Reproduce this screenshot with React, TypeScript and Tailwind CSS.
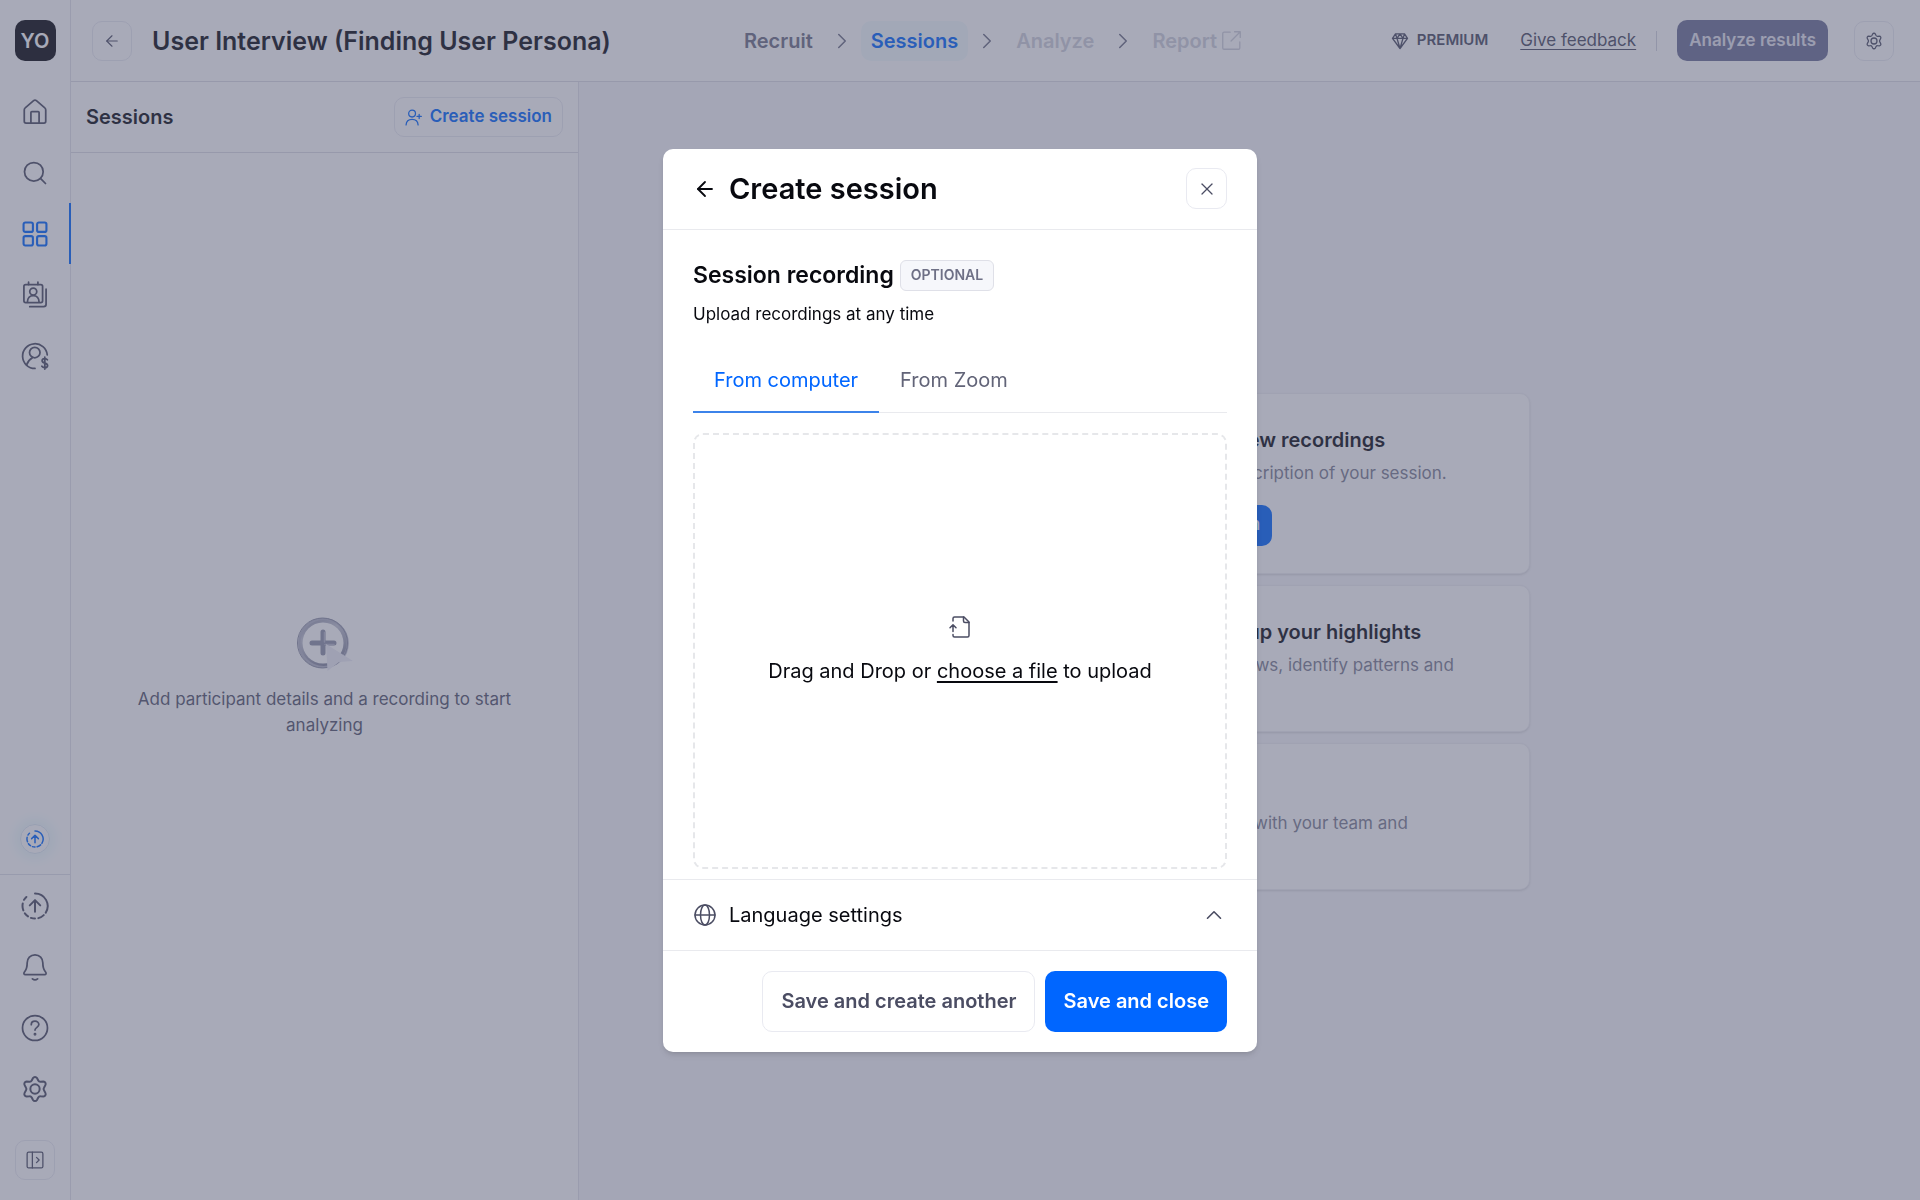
import type { ReactNode } from "react";
import { ArrowLeft, ChevronRight, ChevronUp, Search, X } from "lucide-react";

type IconProps = { className?: string; strokeWidth?: number; children?: ReactNode };

function Icon({ className = "size-6", strokeWidth = 1.5, children }: IconProps) {
  return (
    <svg
      viewBox="0 0 24 24"
      fill="none"
      stroke="currentColor"
      strokeWidth={strokeWidth}
      strokeLinecap="round"
      strokeLinejoin="round"
      className={className}
      aria-hidden="true"
    >
      {children}
    </svg>
  );
}

const HomeIcon = () => (
  <Icon className="size-7">
    <path d="M2.800 10.200c0-.7.300-1.300.8-1.700l7.200-6.200a1.800 1.800 0 0 1 2.400 0l7.200 6.200c.5.400.8 1 .8 1.700v9.800a1.500 1.500 0 0 1-1.500 1.500H4.300A1.500 1.500 0 0 1 2.800 20z" />
    <path d="M8.500 21.500v-9a.8.8 0 0 1 .8-.8h5.400a.8.8 0 0 1 .8.8v9" />
  </Icon>
);

const GridIcon = () => (
  <Icon className="size-7" strokeWidth={1.8}>
    <rect x="2.200" y="2.200" width="8" height="8" rx="1.500" />
    <rect x="13.800" y="2.200" width="8" height="8" rx="1.500" />
    <rect x="2.200" y="13.800" width="8" height="8" rx="1.500" />
    <rect x="13.800" y="13.800" width="8" height="8" rx="1.500" />
  </Icon>
);

const ContactsIcon = () => (
  <Icon className="size-7">
    <rect x="2.500" y="3" width="16" height="15.500" rx="1.500" />
    <path d="M6.500 1v2M14.500 1v2M7.500 22h12a2 2 0 0 0 2-2V7" />
    <circle cx="10.500" cy="9" r="3" />
    <path d="M5.500 18.200c0-3.500 2-5.700 5-5.700s5 2.200 5 5.700" />
  </Icon>
);

const ParticipantIcon = () => (
  <Icon className="size-7">
    <path d="M22.500 11A10.600 10.600 0 1 0 12 22.700" />
    <circle cx="11.800" cy="9" r="4.500" />
    <path d="M4.900 19.400c1-2.900 2.800-4.700 5.100-6.100" />
    <path d="M22.600 15.300c-.5-.7-1.300-1-2.300-1-1.300 0-2.200.7-2.200 1.800 0 2.700 4.700 1.300 4.700 4 0 1.100-1 1.900-2.400 1.900-1.100 0-2-.4-2.500-1.200M20.400 13v10.200" />
  </Icon>
);

const UpgradeIcon = ({ className = "size-7", strokeWidth = 1.7 }: IconProps) => (
  <Icon className={className} strokeWidth={strokeWidth}>
    <path d="M12 1.200a10.800 10.800 0 0 1 9.200 16.500M19.500 19.800a10.800 10.800 0 0 1-4.600 2.600M12 22.800a10.800 10.800 0 0 1-3.500-.6M6 20.900a10.800 10.800 0 0 1-2.700-2.600M2 15.800a10.800 10.800 0 0 1-.5-6M2.600 6.700a10.800 10.800 0 0 1 2-2.400" />
    <path d="M12 17V7.500M7.500 11.500 12 7l4.500 4.500" />
  </Icon>
);

const BellIcon = () => (
  <Icon className="size-7">
    <path d="M12 1.500c-4 0-6.700 2.900-6.700 6.900 0 5.600-1.300 6.600-2.500 8.100-.7.900-.2 2 .9 2h16.600c1.100 0 1.600-1.100.9-2-1.200-1.500-2.500-2.500-2.500-8.100 0-4-2.700-6.900-6.700-6.900z" />
    <path d="M9.800 22.200c1.300 1 3.100 1 4.400 0" />
  </Icon>
);

const HelpIcon = () => (
  <Icon className="size-7">
    <circle cx="12" cy="12" r="10.700" />
    <path d="M8.800 9.200c0-1.800 1.400-3 3.200-3s3.300 1.200 3.300 2.900c0 2.300-3.300 2.400-3.300 4.700" />
    <circle cx="12" cy="17.300" r=".5" fill="currentColor" />
  </Icon>
);

const GearIcon = ({ className = "size-7" }: IconProps) => (
  <Icon className={className} strokeWidth={1.7}>
    <path d="M9.200 4.700 10.300 2.600a2 2 0 0 1 3.400 0l1.100 2.100a2 2 0 0 0 1.900 1l2.500-.1a2.100 2.100 0 0 1 1.700 3.100l-1.200 2.200a2 2 0 0 0 0 2.200l1.200 2.200a2.100 2.100 0 0 1-1.700 3.100l-2.500-.1a2 2 0 0 0-1.900 1l-1.100 2.100a2 2 0 0 1-3.400 0l-1.100-2.100a2 2 0 0 0-1.900-1l-2.500.1a2.100 2.100 0 0 1-1.700-3.100l1.200-2.200a2 2 0 0 0 0-2.200L3.100 8.700a2.100 2.100 0 0 1 1.700-3.100l2.500.1a2 2 0 0 0 1.900-1z" />
    <circle cx="12" cy="12" r="4" />
  </Icon>
);

const PanelIcon = () => (
  <Icon className="size-[18px]" strokeWidth={1.7}>
    <rect x="1.500" y="1.500" width="21" height="21" rx="2" />
    <path d="M8.500 1.500v21M14 8.500l3.500 3.500-3.500 3.500" />
  </Icon>
);

const AddUserIcon = () => (
  <Icon className="size-[17px]" strokeWidth={1.8}>
    <circle cx="10" cy="6.500" r="4.800" />
    <path d="M1.500 22.500c.3-5 3.700-8 8.500-8s8.200 3 8.500 8M20 7.500v6M17 10.500h6" />
  </Icon>
);

const DiamondIcon = () => (
  <Icon className="size-[18px]" strokeWidth={1.8}>
    <path d="M6 2.500h12l4 6-10 13.500-10-13.500zM2 8.500h20M8 8.500l4 13.500 4-13.500M6 2.500l2 6 4-6 4 6 2-6" />
  </Icon>
);

const ExternalIcon = () => (
  <Icon className="size-[21px]">
    <path d="M10.500 2.500h-7A1.500 1.500 0 0 0 2 4v16.500A1.500 1.500 0 0 0 3.500 22H20a1.500 1.500 0 0 0 1.500-1.500v-7M11.500 12.500 22 2M15.500 2H22v6.500" />
  </Icon>
);

const FileUploadIcon = () => (
  <Icon className="size-6">
    <path d="M5 6V3.500A1.500 1.500 0 0 1 6.500 2H16l5 5v13.500a1.500 1.500 0 0 1-1.500 1.500h-13A1.500 1.500 0 0 1 5 20.500V19.500" />
    <path d="M15.500 2v4a1.500 1.500 0 0 0 1.500 1.500h4M5 16.500V10M2 12.800 5 9.800l3 3" />
  </Icon>
);

const GlobeIcon = () => (
  <Icon className="size-6">
    <circle cx="12" cy="12" r="10" />
    <ellipse cx="12" cy="12" rx="4.500" ry="10" />
    <path d="M2 12h20" />
  </Icon>
);

function EmptyArt() {
  return (
    <svg viewBox="0 0 60 56" className="h-14 w-[60px]" aria-hidden="true">
      <defs>
        <linearGradient id="ring" x1="0" y1="0" x2="0.400" y2="1">
          <stop offset="0" stopColor="#8b8ea3" />
          <stop offset="0.400" stopColor="#c2c4d2" />
          <stop offset="1" stopColor="#85889e" />
        </linearGradient>
      </defs>
      <circle cx="29.500" cy="27.500" r="24.500" fill="#dcdde7" />
      <circle cx="28" cy="27" r="25" fill="url(#ring)" />
      <circle cx="28.500" cy="27" r="24" fill="none" stroke="#b3b5c6" strokeWidth="2" />
      <circle cx="28" cy="27" r="20.500" fill="#fff" />
      <circle cx="27.500" cy="27" r="25" fill="none" stroke="#8d90a5" />
      <path d="M28 16v21M17 27h22" stroke="#8f92a8" strokeWidth="5" strokeLinecap="round" />
      <path d="M29.500 16.500v9.500M30 28.500h9" stroke="#b5b7c8" strokeWidth="1.500" strokeLinecap="round" />
      <path d="M31 28 58 45 44 46 32.500 55z" fill="#ececf5" />
    </svg>
  );
}

const TOP_LINKS = [
  { label: "Home", icon: <HomeIcon /> },
  { label: "Search", icon: <Search className="size-7" strokeWidth={1.5} /> },
  { label: "Projects", icon: <GridIcon />, active: true },
  { label: "Contacts", icon: <ContactsIcon /> },
  { label: "Participants", icon: <ParticipantIcon /> },
];

const BOTTOM_LINKS = [
  { label: "Upgrade", icon: <UpgradeIcon /> },
  { label: "Notifications", icon: <BellIcon /> },
  { label: "Help", icon: <HelpIcon /> },
  { label: "Settings", icon: <GearIcon /> },
];

const outlineButton =
  "flex shrink-0 items-center justify-center rounded-[10px] border border-[#e9eaf1] bg-white";

function Sidebar() {
  return (
    <nav className="flex w-[71px] shrink-0 flex-col border-r border-[#e2e3ea] bg-white text-[#4b4d63]" aria-label="Main">
      <div className="flex h-[81px] items-center justify-center">
        <span className="flex size-[41px] items-center justify-center rounded-[10px] bg-[#08090f] text-xl font-semibold text-white">
          YO
        </span>
      </div>
      {TOP_LINKS.map((link) => (
        <a
          key={link.label}
          href="#"
          aria-label={link.label}
          className={
            link.active
              ? "-mr-px flex h-[61px] items-center justify-center border-r-2 border-[#0066ff] text-[#0066ff]"
              : "flex h-[61px] items-center justify-center"
          }
        >
          {link.icon}
        </a>
      ))}

      <div className="mt-auto flex h-[71px] items-center justify-center border-b border-[#dfe0e8]">
        <a
          href="#"
          aria-label="What's new"
          className="flex size-[30px] items-center justify-center rounded-full border border-[#dbe8f2] text-[#0066ff] shadow-[0_0_12px_6px_#edfafc]"
        >
          <UpgradeIcon className="size-[18px]" strokeWidth={2} />
        </a>
      </div>
      {BOTTOM_LINKS.map((link) => (
        <a key={link.label} href="#" aria-label={link.label} className="flex h-[61px] items-center justify-center">
          {link.icon}
        </a>
      ))}
      <div className="flex h-[81px] items-center justify-center">
        <button aria-label="Expand sidebar" className={`${outlineButton} size-10`}>
          <PanelIcon />
        </button>
      </div>
    </nav>
  );
}

function StepArrow() {
  return <ChevronRight className="mx-1.5 size-[26px]" strokeWidth={1.4} />;
}

function Header() {
  return (
    <header className="flex h-[82px] shrink-0 items-center border-b border-[#dcdde5] bg-white pr-[26px] pl-[21px]">
      <div className="flex flex-1 items-center gap-5">
        <button aria-label="Back" className={`${outlineButton} size-10 text-[#4b4d63]`}>
          <ArrowLeft className="size-[18px]" strokeWidth={1.5} />
        </button>
        <h1 className="text-[25px] leading-8 font-semibold whitespace-nowrap text-[#0b0c14]">
          User Interview (Finding User Persona)
        </h1>
      </div>

      <nav className="flex items-center text-xl font-semibold text-[#6e7086]" aria-label="Steps">
        <a href="#" className="px-2.5">Recruit</a>
        <StepArrow />
        <a href="#" className="rounded-[10px] bg-[#f3fbfd] px-2.5 py-1.5 text-[#0066ff]">Sessions</a>
        <StepArrow />
        <span className="px-2.5 text-[#cfd0da]">Analyze</span>
        <StepArrow />
        <span className="flex items-center gap-1 px-2.5 text-[#cfd0da]">
          Report
          <ExternalIcon />
        </span>
      </nav>

      <div className="flex flex-1 items-center justify-end text-[#4b4d63]">
        <span className="flex items-center gap-2 text-[15px] font-semibold">
          <DiamondIcon />
          PREMIUM
        </span>
        <a href="#" className="ml-8 text-[17px] underline underline-offset-3">Give feedback</a>
        <span className="ml-5 h-5 w-px bg-[#d3d4de]" />
        <button className="ml-5 h-[41px] rounded-[10px] bg-[#6d7097] px-3 text-[17px] font-semibold text-[#e4e5ee]">
          Analyze results
        </button>
        <button aria-label="Project settings" className={`${outlineButton} ml-[26px] size-10`}>
          <GearIcon className="size-[18px]" />
        </button>
      </div>
    </header>
  );
}

function SessionsPanel() {
  return (
    <aside className="flex w-[508px] shrink-0 flex-col border-r border-[#e2e3ea] bg-white">
      <div className="flex h-[71px] items-center justify-between border-b border-[#dcdde5] px-[15px]">
        <h2 className="text-xl font-semibold text-[#0b0c14]">Sessions</h2>
        <button className={`${outlineButton} h-10 gap-2 px-2.5 text-[17px] font-semibold text-[#0066ff]`}>
          <AddUserIcon />
          Create session
        </button>
      </div>
      <div className="flex flex-1 flex-col items-center justify-center gap-3.5 px-14 text-center">
        <EmptyArt />
        <p className="text-[17px] leading-[26px] text-[#55576d]">
          Add participant details and a recording to start analyzing
        </p>
      </div>
    </aside>
  );
}

function GuideCard({ title, text, action }: { title: string; text: string; action?: string }) {
  return (
    <article className="min-h-[147px] rounded-[10px] border border-[#eeeef3] bg-white pt-[30px] pr-[66px] pb-[27px] pl-[90px] shadow-sm">
      <h3 className="text-xl leading-8 font-semibold whitespace-nowrap text-[#0b0c14]">{title}</h3>
      <p className="mt-1 text-[17px] leading-[26px] text-[#7c7e92]">{text}</p>
      {action && (
        <button className="mt-[19px] block h-[41px] rounded-[10px] bg-[#0066ff] px-3 text-[17px] font-medium text-white">
          {action}
        </button>
      )}
    </article>
  );
}

function Guide() {
  return (
    <main className="flex flex-1 items-center justify-center bg-[#f7f7fb]">
      <div className="flex w-[561px] flex-col gap-[11px]">
        <GuideCard
          title="Add and translate new recordings"
          text="Get a transcript and description of your session."
          action="Create the first session"
        />
        <GuideCard
          title="Tag notes and sum up your highlights"
          text="Examine all your interviews, identify patterns and themes"
        />
        <GuideCard title="Create report" text="Share your key findings with your team and stakeholders" />
      </div>
    </main>
  );
}

function CreateSessionDialog() {
  return (
    <div className="fixed inset-0 flex items-center justify-center bg-[#515571]/50">
      <section
        role="dialog"
        aria-modal="true"
        aria-labelledby="dialog-title"
        className="w-[594px] rounded-[10px] bg-white text-[#08090f] shadow-md"
      >
        {/* Title bar */}
        <div className="flex h-[81px] items-center border-b border-[#e9eaee] px-[30px]">
          <button aria-label="Back">
            <ArrowLeft className="size-6" strokeWidth={1.8} />
          </button>
          <h2 id="dialog-title" className="ml-3 flex-1 text-[29px] font-semibold">
            Create session
          </h2>
          <button aria-label="Close" className={`${outlineButton} size-[41px] text-[#4b4d63]`}>
            <X className="size-5" strokeWidth={1.5} />
          </button>
        </div>

        {/* Recording */}
        <div className="px-[30px] pt-[30px] pb-2.5">
          <div className="flex h-[31px] items-center gap-1.5">
            <h3 className="text-[23px] font-semibold">Session recording</h3>
            <span className="flex h-[31px] items-center rounded-md border border-[#dfe0e8] bg-[#f6f7fb] px-2.5 text-sm font-semibold text-[#6e7086]">
              OPTIONAL
            </span>
          </div>
          <p className="mt-2 text-[17px] leading-[30px]">Upload recordings at any time</p>

          <div role="tablist" className="mt-5 flex h-[64px] border-b border-[#e9eaee] text-xl">
            <button role="tab" aria-selected="true" className="-mb-px border-b-2 border-[#3c83ea] px-[21px] text-[#0066ff]">
              From computer
            </button>
            <button role="tab" aria-selected="false" className="px-[21px] text-[#626478]">
              From Zoom
            </button>
          </div>

          <div className="mt-5 flex h-[436px] flex-col items-center justify-center gap-4 rounded-[10px] border-2 border-dashed border-[#e6e7ea]">
            <span className="text-[#4b4d63]">
              <FileUploadIcon />
            </span>
            <p className="text-xl leading-8">
              Drag and Drop or <a href="#" className="underline underline-offset-3">choose a file</a> to upload
            </p>
          </div>
        </div>

        <button className="flex h-[72px] w-full items-center border-y border-[#e9eaee] px-[30px] text-[#4b4d63]">
          <GlobeIcon />
          <span className="ml-3 flex-1 text-left text-xl text-[#08090f]">Language settings</span>
          <ChevronUp className="size-[26px]" strokeWidth={1.5} />
        </button>

        <div className="flex justify-end gap-2.5 px-[30px] py-5">
          <button className={`${outlineButton} h-[61px] px-[18px] text-xl font-semibold text-[#4b4d63]`}>
            Save and create another
          </button>
          <button className="h-[61px] rounded-[10px] bg-[#0066ff] px-[18px] text-xl font-semibold text-white">
            Save and close
          </button>
        </div>
      </section>
    </div>
  );
}

export default function App() {
  return (
    <div className="flex min-h-screen bg-white font-['Inter',sans-serif]">
      <Sidebar />
      <div className="flex flex-1 flex-col">
        <Header />
        <div className="flex flex-1">
          <SessionsPanel />
          <Guide />
        </div>
      </div>
      <CreateSessionDialog />
    </div>
  );
}
